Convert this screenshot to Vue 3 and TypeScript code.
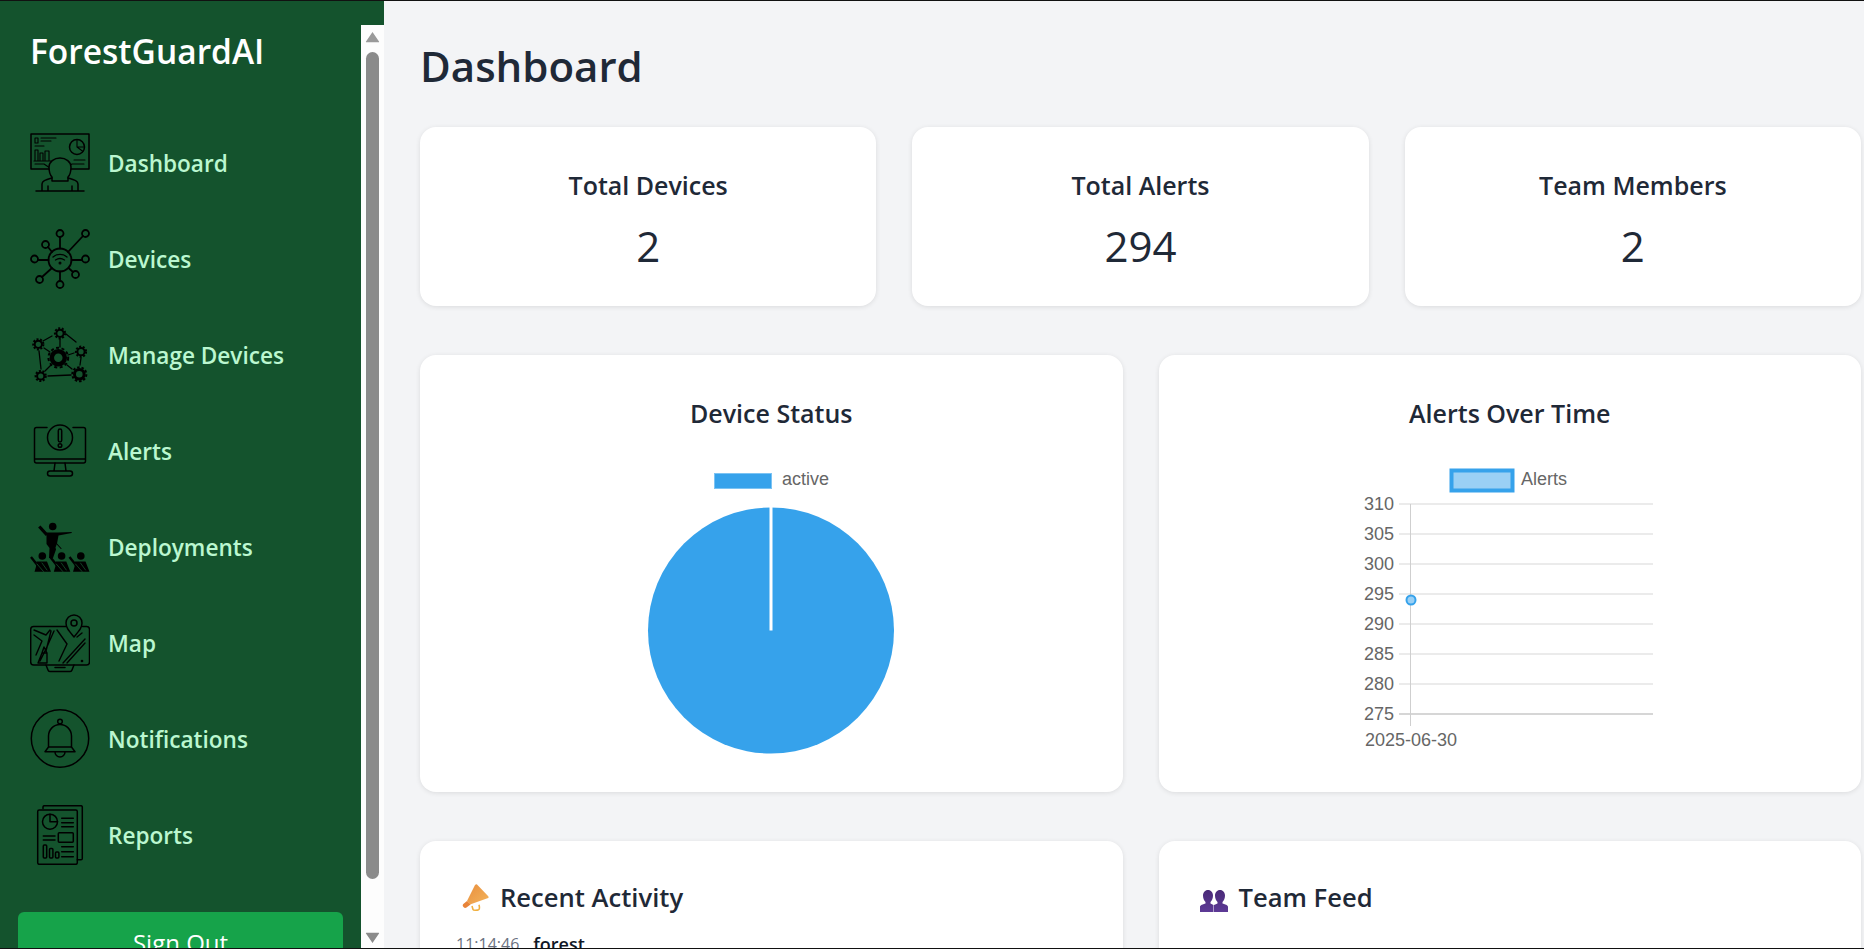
<template>
  <div class="shell">
    <aside class="sidebar">
      <div class="side-body">
        <h2 class="logo">ForestGuardAI</h2>
        <nav class="nav">
          <a v-for="item in navItems" :key="item.key" class="nav-row">
            <svg class="nav-icon" viewBox="0 0 60 60" fill="none" stroke="#000" stroke-width="1.5" stroke-linecap="round" stroke-linejoin="round">
              <g v-if="item.key === 'dashboard'">
                <rect x="1" y="1" width="58" height="35" />
                <path d="M5 5h3v5H5zM11 5h15M11 8h10M5 13h9" stroke-width="1.1" />
                <path d="M5 27v-10h3v10M10 27v-7h3v7M15 27v-9h4v9M4 28h17M5 31h9l6 4M44 27h11M38 33l4-2h12" stroke-width="1.1" />
                <circle cx="47" cy="14" r="7.5" />
                <path d="M47 6.500V14l6 4.500M47 14h7.500" stroke-width="1.1" />
                <path d="M22 44c-2-2-3-6-3-10 0-5 5-9 11-9s11 4 11 9c0 4-1 8-3 10v4H22z" fill="#14532d" />
                <path d="M6 58h48M12 58v-7c0-3 3-4 10-6M48 58v-7c0-3-3-4-10-6M18 58v-5M42 58v-5" />
              </g>
              <g v-else-if="item.key === 'devices'" stroke-width="1.8">
                <circle cx="30" cy="31" r="11.500" />
                <path d="M30 19.500V8M30 42.500V51.500M41.500 31H52M18.500 31H8M38 23l15-16M22 23l-4-5M38.500 39l4.500 4M22 39L12 48" />
                <circle cx="30" cy="4.500" r="3.500" />
                <circle cx="55.500" cy="4.500" r="3.500" />
                <circle cx="55.500" cy="30" r="3.500" />
                <circle cx="4.500" cy="30" r="3.500" />
                <circle cx="15.500" cy="15.500" r="3.500" />
                <circle cx="45.500" cy="45.500" r="3.500" />
                <circle cx="9.500" cy="50.500" r="3.500" />
                <circle cx="30" cy="55.500" r="3.500" />
                <path d="M23 28c4-3.500 10-3.500 14 0M25.500 31c3-2 6-2 9 0" stroke-width="1.300" />
                <circle cx="30" cy="34" r=".6" />
              </g>
              <g v-else-if="item.key === 'manage'">
                <path d="M36 9l10 8M13 16l9-5M9 26l2 18M51 33l-1 7M18 51l23-1M14 23l6 4M44 28l-6 2M30 14v8M37 40l5 4M21 40l-6 6" stroke-width="1.300" />
                <g v-for="g in gears" :key="g.x">
                  <circle :cx="g.x" :cy="g.y" :r="g.r" :stroke-width="g.w" />
                  <circle :cx="g.x" :cy="g.y" :r="g.r + g.w * 0.75" stroke-width="2" :stroke-dasharray="g.dash" stroke-linecap="butt" />
                </g>
              </g>
              <g v-else-if="item.key === 'alerts'">
                <path d="M17 6.500H6.500a2 2 0 0 0-2 2V40a2 2 0 0 0 2 2h47a2 2 0 0 0 2-2V8.500a2 2 0 0 0-2-2H43M4.500 38h51" />
                <circle cx="30" cy="16.500" r="12.500" />
                <rect x="28.300" y="8" width="3.400" height="13" rx="1.700" />
                <circle cx="30" cy="24.500" r="1.800" />
                <path d="M25 42l-1 8h12l-1-8M20 55h20a2.500 2.500 0 0 0 0-5H20a2.500 2.500 0 0 0 0 5z" />
              </g>
              <g v-else-if="item.key === 'deployments'">
                <circle cx="22.700" cy="9.500" r="3.800" fill="#000" stroke="none" />
                <path d="M9.300 9.500L17 18" stroke-width="3.200" stroke-linecap="butt" />
                <path d="M16.500 15.500H28l13.700-.6v1.200L28.500 18.500l-1.500 8-1.500 4 .5 2-3 8.500H19l.5-10-3-4z" fill="#000" stroke="none" />
                <path d="M26 26l5 5.500" stroke-width="1.100" />
                <g v-for="x in [0, 19.300, 38.500]" :key="x" :transform="`translate(${x} 0)`">
                  <circle cx="12.300" cy="39" r="3.800" fill="#000" stroke="none" />
                  <path d="M6.500 44.500h10.500l4 10.200H4.500l1.500-5z" fill="#000" stroke="none" />
                  <path d="M1 40l9 11.500" stroke="#000" stroke-width="2.400" stroke-linecap="butt" />
                  <path d="M7 47l6.500 7.500M12 46l5 7" stroke="#14532d" stroke-width=".8" />
                </g>
              </g>
              <g v-else-if="item.key === 'map'">
                <path d="M36 13.500H3a3 3 0 0 0-3 3V49a3 3 0 0 0 3 3h54a3 3 0 0 0 3-3V16.500a3 3 0 0 0-3-3h-4" transform="translate(0.7 0) scale(.98 1)" />
                <path d="M16 52l2 5a2 2 0 0 0 2 1.500h20a2 2 0 0 0 2-1.500l2-5M25 54.500h10" />
                <path d="M4 22l8 6-6 14M4 17l12 5 4-5M10 48l6-12 8-18M16 38l5-20M12 40l5 0v10h-9zM14 34l3 6-5 0zM27 17l10 14-8 17M33 50l22-24M37 50l18-20M47 24l5-4" stroke-width="1.400" />
                <path d="M44 24c-5-6-8-9-8-14a8 8 0 0 1 16 0c0 5-3 8-8 14z" fill="#14532d" />
                <circle cx="44" cy="10" r="3" />
                <circle cx="52" cy="48" r=".6" />
              </g>
              <g v-else-if="item.key === 'notifications'">
                <circle cx="30" cy="29.500" r="28.700" />
                <circle cx="30" cy="12.500" r="2.300" />
                <path d="M18.500 38V27a11.500 11.500 0 0 1 23 0v11M18.500 38l-3.500 4.700h30L41.500 38M18.500 38h23M25 43a5 5 0 0 0 10 0" />
              </g>
              <g v-else>
                <path d="M13 3.500V2a1.300 1.300 0 0 1 1.300-1.300h36.700a1.300 1.300 0 0 1 1.300 1.300v51.500a1.300 1.300 0 0 1-1.300 1.300h-3.700" />
                <rect x="7.700" y="5" width="39.600" height="54.300" rx="1.500" />
                <circle cx="20" cy="16.700" r="7.500" />
                <path d="M20 9.200v7.500h7.500M31.700 13.300h11.600M31.700 17.700h11.600M31.700 21.700h11.600M13.300 31h11.700M13.300 35h11.700M31.700 41.700h11.600M31.700 46.700h11.600M31.700 51.700h11.600" />
                <rect x="28.300" y="27.700" width="15" height="9.600" rx="1" />
                <rect x="13.300" y="40" width="3.400" height="13" rx="1" />
                <rect x="19.500" y="43.500" width="3.400" height="9.500" rx="1" />
                <rect x="25.500" y="47" width="3.400" height="6" rx="1" />
              </g>
            </svg>
            <span class="nav-label">{{ item.label }}</span>
          </a>
        </nav>
        <button class="sign-out" type="button">Sign Out</button>
      </div>
      <div class="fake-scroll">
        <svg class="arrow" viewBox="0 0 15 12"><path d="M7.500 1L14 10.500a.5.5 0 0 1-.4.8H1.400a.5.500 0 0 1-.4-.8z" fill="#9a9a9a" /></svg>
        <div class="thumb"></div>
        <svg class="arrow" viewBox="0 0 15 12"><path d="M7.500 11L14 1.500a.5.5 0 0 0-.4-.8H1.400a.5.500 0 0 0-.4.8z" fill="#8b8b8b" /></svg>
      </div>
    </aside>

    <main class="main">
      <h1 class="page-title">Dashboard</h1>

      <section class="stats">
        <div v-for="s in stats" :key="s.label" class="card stat">
          <h3 class="stat-label">{{ s.label }}</h3>
          <p class="stat-value">{{ s.value }}</p>
        </div>
      </section>

      <section class="charts">
        <div class="card chart-card">
          <h3 class="card-title">Device Status</h3>
          <svg class="chart" viewBox="0 0 300 300" width="300" height="300">
            <rect x="93.500" y="13.500" width="57" height="15" fill="#36a2eb" stroke="#7cc3f3" />
            <text x="161" y="25" class="chart-text">active</text>
            <circle cx="150" cy="170.500" r="123" fill="#36a2eb" />
            <rect x="148.500" y="47" width="3" height="123.500" fill="#fff" />
          </svg>
        </div>
        <div class="card chart-card">
          <h3 class="card-title">Alerts Over Time</h3>
          <svg class="chart" viewBox="0 0 300 300" width="300" height="300">
            <rect x="91.500" y="10.500" width="61" height="20" fill="#9ad0f5" stroke="#36a2eb" stroke-width="4" />
            <text x="161" y="25" class="chart-text">Alerts</text>
            <g v-for="(t, i) in ticks" :key="t">
              <line x1="39" :x2="293" :y1="44 + i * 30" :y2="44 + i * 30" :stroke="t === 275 ? '#c9c9c9' : '#e4e4e4'" stroke-width="1.300" />
              <text x="34" :y="49.500 + i * 30" text-anchor="end" class="chart-text">{{ t }}</text>
            </g>
            <line x1="50.500" x2="50.500" y1="44" y2="266" stroke="#cfcfcf" />
            <circle cx="51" cy="140" r="4.500" fill="#9ad0f5" stroke="#36a2eb" stroke-width="2" />
            <text x="51" y="286" text-anchor="middle" class="chart-text">2025-06-30</text>
          </svg>
        </div>
      </section>

      <section class="feeds">
        <div class="card feed-card">
          <h3 class="feed-title">
            <svg class="feed-icon" viewBox="0 0 28 28">
              <defs>
                <linearGradient id="horn" x1="0" y1="0" x2="1" y2="1">
                  <stop offset="0" stop-color="#e98f3e" />
                  <stop offset="1" stop-color="#f3b45c" />
                </linearGradient>
              </defs>
              <path d="M14 1c1-1 2-1 2.500 0L27 12c1 1 .8 2-.5 2.300L9 20.500 6 17z" fill="url(#horn)" />
              <path d="M6 17l3.500 3.500-4 3c-1 .8-2 .6-3-.4s-1-2-.2-3z" fill="#e8843a" />
              <path d="M11 22l1 3.500c.3 1 4 1 5.500.3 1-.5 1-3 .5-5" fill="none" stroke="#f0b040" stroke-width="1.600" />
            </svg>
            Recent Activity
          </h3>
          <p class="activity"><span class="time">11:14:46</span><strong>forest</strong></p>
        </div>
        <div class="card feed-card">
          <h3 class="feed-title">
            <svg class="feed-icon team" viewBox="0 0 28 22">
              <defs>
                <linearGradient id="ppl" x1="0" y1="0" x2="0" y2="1">
                  <stop offset="0" stop-color="#4a2a78" />
                  <stop offset="1" stop-color="#5d3a96" />
                </linearGradient>
              </defs>
              <path d="M8 0c3 0 5 2.500 5 5.500 0 3-1 5-2.500 6.500v1.500l3 1.500V22H0v-5c0-1.500 1-2 5.500-3.500V12C4 10.500 3 8.500 3 5.500 3 2.500 5 0 8 0z" fill="url(#ppl)" />
              <path d="M20 0c3 0 5 2.500 5 5.500 0 3-1 5-2.500 6.500v1.500C27 15 28 15.500 28 17v5H14v-7l3.500-1.500V12C16 10.500 15 8.500 15 5.500 15 2.500 17 0 20 0z" fill="url(#ppl)" />
            </svg>
            Team Feed
          </h3>
        </div>
      </section>
    </main>
  </div>
</template>

<script setup lang="ts">
interface NavItem {
  key: string
  label: string
}

const navItems: NavItem[] = [
  { key: 'dashboard', label: 'Dashboard' },
  { key: 'devices', label: 'Devices' },
  { key: 'manage', label: 'Manage Devices' },
  { key: 'alerts', label: 'Alerts' },
  { key: 'deployments', label: 'Deployments' },
  { key: 'map', label: 'Map' },
  { key: 'notifications', label: 'Notifications' },
  { key: 'reports', label: 'Reports' },
]

const gears = [
  { x: 28.3, y: 32.7, r: 6.5, w: 4.5, dash: '3 2.500' },
  { x: 30, y: 8.3, r: 3.6, w: 2, dash: '2 1.600' },
  { x: 8.3, y: 19.3, r: 3.6, w: 2, dash: '2 1.600' },
  { x: 51, y: 26.7, r: 3.6, w: 2, dash: '2 1.600' },
  { x: 49.3, y: 49.3, r: 4.8, w: 3, dash: '2.500 1.900' },
  { x: 10.7, y: 51, r: 3.6, w: 2, dash: '2 1.600' },
]

const stats = [
  { label: 'Total Devices', value: 2 },
  { label: 'Total Alerts', value: 294 },
  { label: 'Team Members', value: 2 },
]

const ticks = [310, 305, 300, 295, 290, 285, 280, 275]
</script>

<style>
html,
body {
  margin: 0;
  overflow: hidden;
}
</style>

<style scoped>
.shell {
  display: flex;
  box-sizing: border-box;
  width: 1864px;
  height: 949px;
  overflow: hidden;
  border-top: 1px solid #111;
  border-bottom: 1px solid #111;
  background: #f3f4f6;
  color: #1f2937;
  font-family: "Open Sans", "Noto Sans", sans-serif;
}

.sidebar {
  display: flex;
  flex: 0 0 384px;
  background: #14532d;
  overflow: hidden;
}

.side-body {
  flex: 0 0 361px;
}

.logo {
  margin: 0;
  padding: 28px 0 0 30px;
  height: 84px;
  box-sizing: border-box;
  font-size: 33.5px;
  line-height: 44px;
  font-weight: 600;
  color: #fff;
}

.nav {
  display: flex;
  flex-direction: column;
  margin-top: 30px;
}

.nav-row {
  display: flex;
  align-items: center;
  gap: 18px;
  height: 96px;
  padding-left: 30px;
}

.nav-icon {
  flex: 0 0 60px;
  width: 60px;
  height: 60px;
}

.nav-label {
  padding-top: 1px;
  font-size: 22.6px;
  font-weight: 600;
  color: #bbf7d0;
}

.sign-out {
  display: block;
  width: 325px;
  height: 60px;
  margin: 29px 0 0 18px;
  border: 0;
  border-radius: 6px;
  background: #16a34a;
  color: #fff;
  font-family: inherit;
  font-size: 24px;
}

.fake-scroll {
  display: flex;
  flex-direction: column;
  align-items: center;
  flex: 0 0 23px;
  margin-top: 24px;
  padding: 6px 0 4px;
  box-sizing: border-box;
  background: #fdfdfd;
}

.arrow {
  flex: 0 0 12px;
  width: 15px;
  height: 12px;
}

.thumb {
  flex: 1;
  width: 13px;
  margin: 9px 0 53px;
  border-radius: 7px;
  background: #8b8b8b;
}

.main {
  flex: 1;
  min-width: 0;
  padding: 0 3px 0 36px;
}

.page-title {
  margin: 0;
  height: 126px;
  padding-top: 38px;
  box-sizing: border-box;
  font-size: 42px;
  line-height: 54px;
  font-weight: 600;
}

.card {
  background: #fff;
  border-radius: 16px;
  box-shadow: 0 1px 5px rgba(0, 0, 0, 0.1);
}

.stats {
  display: grid;
  grid-template-columns: repeat(3, 1fr);
  gap: 36px;
}

.stat {
  height: 179px;
  box-sizing: border-box;
  padding-top: 40px;
  text-align: center;
}

.stat-label {
  margin: 0;
  font-size: 25px;
  line-height: 36px;
  font-weight: 600;
}

.stat-value {
  margin: 14px 0 0;
  font-size: 42px;
  line-height: 58px;
  font-weight: 400;
}

.charts,
.feeds {
  display: grid;
  grid-template-columns: 1fr 1fr;
  gap: 36px;
  margin-top: 49px;
}

.chart-card {
  display: flex;
  flex-direction: column;
  align-items: center;
  height: 437px;
  box-sizing: border-box;
  padding-top: 40px;
}

.card-title {
  margin: 0 0 29px;
  font-size: 25px;
  line-height: 36px;
  font-weight: 600;
}

.chart {
  display: block;
}

.chart-text {
  font-family: "Liberation Sans", Arial, sans-serif;
  font-size: 18px;
  fill: #666;
}

.feed-card {
  height: 200px;
  box-sizing: border-box;
  padding: 39px 36px 0;
}

.feed-title {
  display: flex;
  align-items: center;
  gap: 11px;
  margin: 0;
  font-size: 25.6px;
  line-height: 36px;
  font-weight: 600;
}

.feed-icon {
  width: 28px;
  height: 28px;
  margin-left: 5px;
}

.feed-icon.team {
  height: 22px;
  margin-top: 6px;
}

.activity {
  display: flex;
  align-items: center;
  gap: 14px;
  margin: 16px 0 0;
}

.time {
  font-size: 16px;
  color: #6b7280;
}

.activity strong {
  font-size: 18px;
  font-weight: 600;
  color: #111827;
}
</style>
